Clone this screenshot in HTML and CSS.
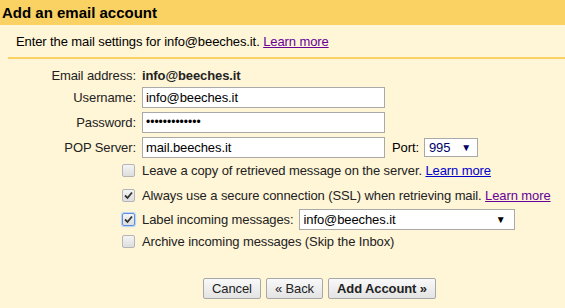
FILE: index.html
```html
<!DOCTYPE html>
<html lang="en">
<head>
  <meta charset="UTF-8" />
  <title>Add an email account</title>
  <link rel="stylesheet" href="styles.css">
</head>
<body>
  <div class="header">Add an email account</div>

  <div class="intro">
    Enter the mail settings for info@beeches.it. <a href="#" class="visited">Learn more</a>
  </div>

  <div class="form">
    <div class="row row-email">
      <span class="label">Email address:</span>
      <span class="value">info@beeches.it</span>
    </div>
    <div class="row">
      <span class="label">Username:</span>
      <span class="input">info@beeches.it</span>
    </div>
    <div class="row">
      <span class="label">Password:</span>
      <span class="input dots">&bull;&bull;&bull;&bull;&bull;&bull;&bull;&bull;&bull;&bull;&bull;&bull;&bull;</span>
    </div>
    <div class="row">
      <span class="label">POP Server:</span>
      <span class="input">mail.beeches.it</span>
      <span class="port-label">Port:</span>
      <span class="select port">995 <span class="arrow">&#9660;</span></span>
    </div>

    <div class="checks">
      <div class="check-row c1">
        <span class="box"></span>
        <span>Leave a copy of retrieved message on the server. <a href="#">Learn more</a></span>
      </div>
      <div class="check-row c2">
        <span class="box checked">
          <svg width="9" height="9" viewBox="0 0 9 9"><path d="M1 4.5 L3.5 7 L8 1.5" fill="none" stroke="#333" stroke-width="1.8"/></svg>
        </span>
        <span>Always use a secure connection (SSL) when retrieving mail. <a href="#" class="visited">Learn more</a></span>
      </div>
      <div class="check-row c3">
        <span class="box checked focus">
          <svg width="9" height="9" viewBox="0 0 9 9"><path d="M1 4.5 L3.5 7 L8 1.5" fill="none" stroke="#333" stroke-width="1.8"/></svg>
        </span>
        <span>Label incoming messages:</span>
        <span class="select label-select">info@beeches.it <span class="arrow">&#9660;</span></span>
      </div>
      <div class="check-row c4">
        <span class="box"></span>
        <span>Archive incoming messages (Skip the Inbox)</span>
      </div>
    </div>

    <div class="buttons">
      <button class="btn">Cancel</button>
      <button class="btn">&laquo; Back</button>
      <button class="btn primary">Add Account &raquo;</button>
    </div>
  </div>
</body>
</html>
```

FILE: styles.css
```css
/* Base */
body, html {
  margin: 0;
  padding: 0;
  height: 100%;
  background-color: #fff5d7;
  font-family: 'Liberation Sans', Arial, sans-serif;
  font-size: 13px;
  letter-spacing: -0.1px;
  color: #000;
}

a {
  color: #0000cc;
}

a.visited {
  color: #660099;
}

.header {
  height: 25px;
  line-height: 25px;
  padding-left: 2px;
  background-color: #fad163;
  font-size: 15px;
  font-weight: bold;
  letter-spacing: 0;
}

.intro {
  margin-left: 8px;
  padding: 9px 0 7px 8px;
  line-height: 16px;
  border-bottom: 2px solid #fad163;
}

.form {
  padding-top: 8px;
}

.row {
  display: flex;
  align-items: center;
  height: 21px;
  margin-bottom: 4px;
}

.row-email {
  height: 16px;
}

.label {
  width: 136px;
  text-align: right;
  margin-right: 6px;
  color: #222;
}

.value {
  font-weight: bold;
  color: #222;
}

.input {
  box-sizing: border-box;
  width: 243px;
  height: 21px;
  line-height: 19px;
  padding-left: 3px;
  border: 1px solid #a9a9a9;
  background: #fff;
}

.input.dots {
  font-size: 12px;
  letter-spacing: 0;
}

.port-label {
  margin: 0 5px 0 7px;
}

.select {
  box-sizing: border-box;
  display: flex;
  justify-content: space-between;
  align-items: center;
  height: 19px;
  padding: 0 6px 0 4px;
  border: 1px solid #a9a9a9;
  background: #fff;
  color: #000;
}

.select .arrow {
  font-size: 10px;
}

.port {
  width: 54px;
  color: #000066;
}

.checks {
  margin-top: 1px;
}

.check-row {
  display: flex;
  align-items: center;
  padding-left: 122px;
  height: 16px;
  color: #222;
}

.check-row.c2 {
  margin-top: 9px;
}

.check-row.c3 {
  margin-top: 6px;
  height: 21px;
}

.check-row.c4 {
  margin-top: 3px;
}

.box {
  box-sizing: border-box;
  display: inline-flex;
  align-items: center;
  justify-content: center;
  width: 13px;
  height: 13px;
  margin-right: 7px;
  border: 1px solid #b5b5b5;
  border-radius: 2px;
  background: linear-gradient(#f4f4f4, #dedede);
}

.box.focus {
  border-color: #5b8fe0;
  box-shadow: 0 0 1px 1px #b8d0f5;
}

.label-select {
  width: 216px;
  height: 21px;
  margin-left: 5px;
  padding-left: 4px;
  padding-right: 8px;
}

.buttons {
  display: flex;
  gap: 5px;
  padding-left: 203px;
  margin-top: 29px;
}

.btn {
  height: 21px;
  padding: 0 8px;
  border: 1px solid #a8a8a8;
  border-radius: 2px;
  background: linear-gradient(#f9f9f9, #e3e3e3);
  font-family: 'Liberation Sans', Arial, sans-serif;
  font-size: 13px;
  letter-spacing: -0.1px;
  color: #222;
}

.btn.primary {
  font-weight: bold;
}
```
